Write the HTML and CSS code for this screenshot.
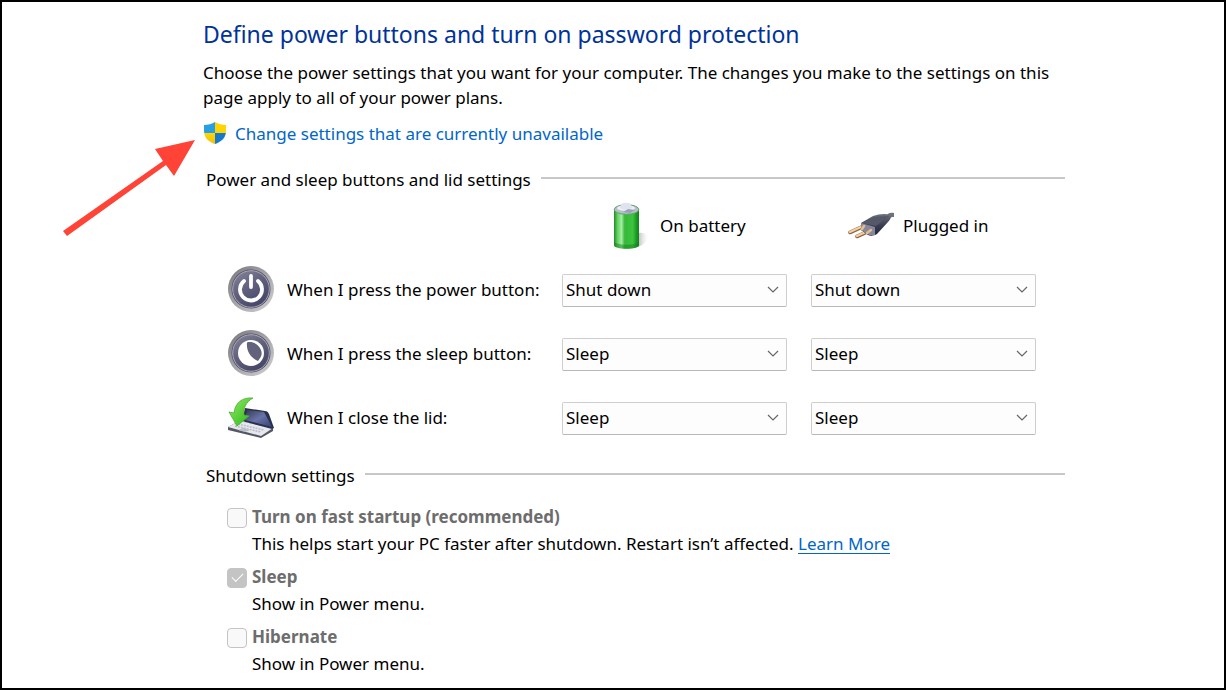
FILE: index.html
```html
<!DOCTYPE html>
<html lang="en">
<head>
<meta charset="utf-8">
<meta name="viewport" content="width=device-width, initial-scale=1">
<title>Power Options</title>
<link rel="stylesheet" href="styles.css">
</head>
<body class="page">
<svg width="0" height="0" class="defs" aria-hidden="true">
  <defs>
    <linearGradient id="rim" x1="0" y1="0" x2="1" y2="1"><stop offset="0" stop-color="#75757a"/><stop offset=".5" stop-color="#a5a5aa"/><stop offset="1" stop-color="#d2d2d4"/></linearGradient>
    <linearGradient id="face" x1="0" y1="0" x2=".6" y2="1"><stop offset="0" stop-color="#85859b"/><stop offset=".5" stop-color="#62627f"/><stop offset="1" stop-color="#464669"/></linearGradient>
    <symbol id="chevron" viewBox="0 0 12 8"><path d="M1 1l5 5 5-5" fill="none" stroke="#666" stroke-width="1.2"/></symbol>
  </defs>
</svg>
<main class="content">
  <h1 class="title">Define power buttons and turn on password protection</h1>
  <p class="intro">Choose the power settings that you want for your computer. The changes you make to the settings on this page apply to all of your power plans.</p>
  <div class="elevate">
    <svg class="shield" viewBox="0 0 24 24" aria-hidden="true">
      <defs><clipPath id="shield-shape"><path d="M12 0c3 2 7 3 11 3v6c0 7-5 11-11 13C6 20 1 16 1 9V3c4 0 8-1 11-3z"/></clipPath>
      <linearGradient id="gold" x1="0" y1="0" x2="0" y2="1"><stop offset="0" stop-color="#ffd900"/><stop offset="1" stop-color="#f4b515"/></linearGradient></defs>
      <g clip-path="url(#shield-shape)"><path fill="#269fe5" d="M0 0h12v11H0z"/><path fill="#ffd400" d="M12 0h12v11H12z"/><path fill="url(#gold)" d="M0 11h12v13H0z"/><path fill="#1779c9" d="M12 11h12v13H12z"/></g>
    </svg>
    <a class="link" href="#">Change settings that are currently unavailable</a>
    <svg class="arrow" viewBox="0 0 136 104" aria-hidden="true"><path fill="#ff4336" d="M135 5 114 41 106 30 7 101 3 96 103 26 95 14z"/></svg>
  </div>

  <section>
    <h2 class="heading">Power and sleep buttons and lid settings</h2>
    <div class="settings">
      <div class="source source-battery">
        <svg class="battery-icon" viewBox="0 0 54 48" aria-hidden="true">
          <defs><linearGradient id="cell" x1="0" y1="0" x2="1" y2="0"><stop offset="0" stop-color="#238a27"/><stop offset=".15" stop-color="#63d765"/><stop offset=".3" stop-color="#a5eba3"/><stop offset=".43" stop-color="#36b73a"/><stop offset=".75" stop-color="#3cc43e"/><stop offset=".9" stop-color="#189a20"/><stop offset="1" stop-color="#217b26"/></linearGradient>
          <linearGradient id="cast" x1="0" y1="0" x2="1" y2="0"><stop offset="0" stop-color="#777"/><stop offset="1" stop-color="#ddd" stop-opacity="0"/></linearGradient></defs>
          <path d="M38 31c6-1 13 1 12 5-1 5-8 9-15 10z" fill="url(#cast)"/>
          <path d="M16 7v36c0 5 25 5 25 0V7z" fill="url(#cell)"/>
          <path d="M16 39v4c0 5 25 5 25 0v-4c-1 5-24 5-25 0z" fill="#16811f" opacity=".5"/>
          <ellipse cx="28.500" cy="7.500" rx="12.300" ry="4.800" fill="#b9becb" stroke="#5aa765"/>
          <ellipse cx="28" cy="6" rx="9" ry="3" fill="#edf0f5"/>
          <path d="M23 3c0-3 10-3 10 0l1 3c-3 2-9 2-12 0z" fill="#dfe2ef"/><path d="M30 7l7 1-5 3-7-1z" fill="#9ba0b7"/>
        </svg>
        <span>On battery</span>
      </div>
      <div class="source source-plug">
        <svg class="icon" viewBox="0 0 48 48" aria-hidden="true">
          <defs><linearGradient id="plug" x1="0" y1="0" x2="0" y2="1"><stop offset="0" stop-color="#6f7280"/><stop offset=".5" stop-color="#3c3f56"/><stop offset="1" stop-color="#222438"/></linearGradient></defs>
          <path d="M38 14c4-3 5-4 9-3v4c-4 0-5 2-8 4z" fill="#6f7375"/>
          <path d="M3 30.500 17 24M10 34.500 23 28.500" stroke="#8a643f" stroke-width="3.600" stroke-linecap="round"/>
          <path d="M3 30 17 23.500M10 34 23 28" stroke="#f3cfa5" stroke-width="2.200" stroke-linecap="round"/>
          <path d="M14 21 26 14c6-2 12-3 17-1 2 2 0 5-2 7L30 32c-3 2-7 2-9 1l-7-5z" fill="url(#plug)"/>
          <path d="M15 21 27 15l15-1-13 10z" fill="#555967"/>
          <path d="M14 21 28 25 28 33 22 33 14 28z" fill="#85889a"/>
          <path d="M15 27 17 24M20 31 24 28" stroke="#e7bd8b" stroke-width="2.500" stroke-linecap="round"/>
        </svg>
        <span>Plugged in</span>
      </div>

      <div class="action">
        <svg class="icon" viewBox="0 0 48 48" aria-hidden="true"><circle cx="24" cy="23" r="23" fill="url(#rim)"/><circle cx="24" cy="23" r="19.500" fill="#505064"/><circle cx="24" cy="23" r="18.300" fill="url(#face)" stroke="#aaaab9" stroke-width="1"/><path d="M17 15a11 11 0 1 0 14 0" fill="none" stroke="#fff" stroke-width="3.800" stroke-linecap="round"/><path d="M24 10v11" stroke="#fff" stroke-width="3.800" stroke-linecap="round"/></svg>
        <span id="power-label">When I press the power button:</span>
      </div>
      <div class="picker"><select class="select" aria-labelledby="power-label"><option>Shut down</option><option>Sleep</option></select><svg class="chevron" aria-hidden="true"><use href="#chevron"/></svg></div>
      <div class="picker"><select class="select" aria-labelledby="power-label"><option>Shut down</option><option>Sleep</option></select><svg class="chevron" aria-hidden="true"><use href="#chevron"/></svg></div>

      <div class="action">
        <svg class="icon" viewBox="0 0 48 48" aria-hidden="true"><circle cx="24" cy="23" r="23" fill="url(#rim)"/><circle cx="24" cy="23" r="19.500" fill="#505064"/><circle cx="24" cy="23" r="18.300" fill="url(#face)" stroke="#aaaab9" stroke-width="1"/><circle cx="24" cy="23" r="13" fill="#fff"/><path d="M20 12.500C24 11 31 13 34 20c2 6-1 8-3 11-7-3-12-10-11-18.500z" fill="#62627d"/></svg>
        <span id="sleep-label">When I press the sleep button:</span>
      </div>
      <div class="picker"><select class="select" aria-labelledby="sleep-label"><option>Sleep</option><option>Shut down</option></select><svg class="chevron" aria-hidden="true"><use href="#chevron"/></svg></div>
      <div class="picker"><select class="select" aria-labelledby="sleep-label"><option>Sleep</option><option>Shut down</option></select><svg class="chevron" aria-hidden="true"><use href="#chevron"/></svg></div>

      <div class="action">
        <svg class="icon" viewBox="0 0 48 48" aria-hidden="true">
          <defs><linearGradient id="lid" x1="0" y1="0" x2="1" y2="1"><stop offset="0" stop-color="#343850"/><stop offset=".5" stop-color="#6874a7"/><stop offset="1" stop-color="#344076"/></linearGradient><linearGradient id="leaf" x1="0" y1="0" x2="1" y2="1"><stop offset="0" stop-color="#92ec66"/><stop offset="1" stop-color="#27b513"/></linearGradient></defs>
          <path d="M1 33 12 27 46 34 46 37 34 44 1 36z" fill="#555864"/>
          <path d="M1 33 12 27 46 34 34 42z" fill="#e6e8ed"/><path d="M11 30 37 36M8 32 34 38" stroke="#b9bcc6" stroke-width="1.500" stroke-dasharray="2 1"/><path d="m11 36 5-2 7 2-5 2z" fill="#b9bdc7"/>
          <path d="M18 14 38 17c2 0 3 1 4 3l5 14-2 1-30-8z" fill="#28304d"/><path d="M20 16 37 18 45 33 18 26z" fill="url(#lid)"/>
          <path d="M26 4C15 3 8 9 7 19L2 18 10 32 22 22 17 21c-1-7 2-13 9-17z" fill="url(#leaf)" stroke="#4dac31" stroke-width=".800"/>
        </svg>
        <span id="lid-label">When I close the lid:</span>
      </div>
      <div class="picker"><select class="select" aria-labelledby="lid-label"><option>Sleep</option><option>Shut down</option></select><svg class="chevron" aria-hidden="true"><use href="#chevron"/></svg></div>
      <div class="picker"><select class="select" aria-labelledby="lid-label"><option>Sleep</option><option>Shut down</option></select><svg class="chevron" aria-hidden="true"><use href="#chevron"/></svg></div>
    </div>
  </section>

  <section>
    <h2 class="heading">Shutdown settings</h2>
    <div class="options">
      <div class="option"><input class="check" type="checkbox" id="fast" disabled><label class="option-name" for="fast">Turn on fast startup (recommended)</label><p class="option-note">This helps start your PC faster after shutdown. Restart isn’t affected. <a class="link learn" href="#">Learn More</a></p></div>
      <div class="option"><input class="check" type="checkbox" id="sleep" checked disabled><label class="option-name" for="sleep">Sleep</label><p class="option-note">Show in Power menu.</p></div>
      <div class="option"><input class="check" type="checkbox" id="hibernate" disabled><label class="option-name" for="hibernate">Hibernate</label><p class="option-note">Show in Power menu.</p></div>
    </div>
  </section>
</main>
</body>
</html>
```
FILE: styles.css
```css
* { box-sizing: border-box; }
.page {
  margin: 0;
  min-height: 100vh;
  border: 2px solid #000;
  background: #fff;
  color: #000;
  font-family: "Noto Sans", "Open Sans", sans-serif;
  font-size: 17px;
  line-height: 24px;
}
.defs { position: absolute; }
.content { padding: 16px 159px 10px 201px; }
.title {
  margin: 0 0 10px;
  color: #003399;
  font-size: 23px;
  font-weight: 400;
  line-height: 32px;
}
.intro { margin: 0 0 12px; line-height: 25px; }
.elevate { position: relative; display: flex; align-items: center; gap: 8px; }
.shield { width: 24px; height: 24px; }
.link { color: #0066cc; text-decoration: none; }
.arrow { position: absolute; right: 100%; top: 13px; width: 136px; height: 104px; margin-right: 7px; }
.heading {
  display: flex;
  align-items: center;
  gap: 10px;
  margin: 22px 0 0;
  padding-left: 3px;
  font-size: 17px;
  font-weight: 400;
}
.heading::after { content: ""; flex: 1; height: 2px; margin-bottom: 4px; background: #c8c8c8; }
.settings {
  display: grid;
  grid-template-columns: minmax(0, 311fr) minmax(0, 225fr) minmax(0, 225fr);
  column-gap: 24px;
  row-gap: 16px;
  align-items: center;
  margin-top: 10px;
  padding: 0 29px 0 24px;
}
.source { display: flex; align-items: center; gap: 8px; padding-left: 36px; }
.source-battery { grid-column: 2; }
.battery-icon { width: 54px; height: 48px; }
.icon { flex: none; width: 48px; height: 48px; }
.action { display: flex; align-items: center; gap: 12px; white-space: nowrap; }
.picker { display: grid; align-items: center; }
.select {
  grid-area: 1 / 1;
  width: 100%;
  height: 33px;
  margin: 0;
  padding: 0 32px 0 3px;
  appearance: none;
  border: 1px solid #cecece;
  border-bottom-color: #b8b8b8;
  border-radius: 2px;
  background: #fdfdfd;
  color: #000;
  font: inherit;
}
.chevron { grid-area: 1 / 1; justify-self: end; width: 12px; height: 8px; margin-right: 8px; pointer-events: none; }
.options { display: grid; gap: 6px; margin-top: 15px; padding-left: 24px; }
.option { display: grid; grid-template-columns: 20px 1fr; column-gap: 5px; align-items: center; line-height: 27px; }
.check {
  display: grid;
  place-items: center;
  width: 20px;
  height: 20px;
  margin: 2px 0 0;
  appearance: none;
  border: 1px solid #c4c4c4;
  border-radius: 4px;
  background: #f9f9f9;
}
.check:checked { background: #c4c4c4; }
.check:checked::after {
  content: "";
  width: 10px;
  height: 5px;
  margin-bottom: 3px;
  border: solid #fff;
  border-width: 0 0 1px 1px;
  transform: rotate(-45deg);
}
.option-name { color: #6d6d6d; font-weight: 700; }
.option-note { grid-column: 2; margin: 0; }
.learn { text-decoration: underline; text-decoration-thickness: 1px; text-underline-offset: 3px; }
```
